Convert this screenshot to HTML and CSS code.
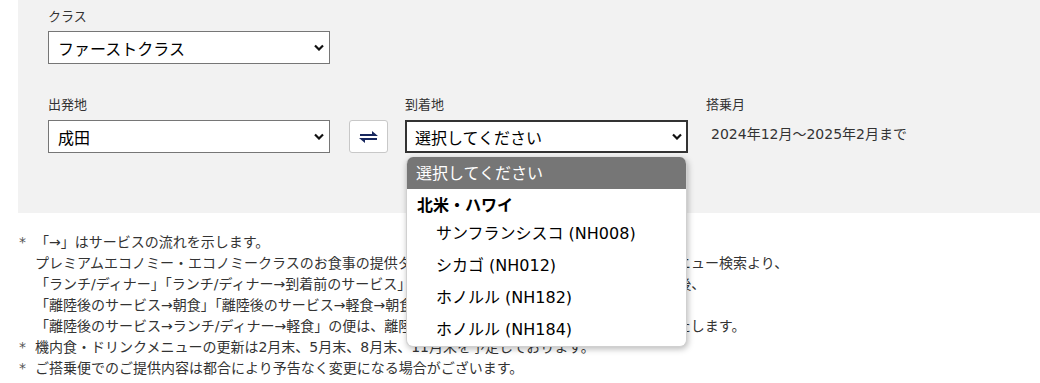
FILE: index.html
```html
<!DOCTYPE html>
<html lang="ja">
<head>
<meta charset="utf-8">
<title>機内食メニュー検索</title>
<link rel="stylesheet" href="styles.css">
</head>
<body>
<div class="panel">
  <div class="field">
    <div class="label">クラス</div>
    <div class="select">
      <span class="value">ファーストクラス</span>
      <svg class="chev" width="10" height="7" viewBox="0 0 10 7"><polyline points="1,1.5 5,5.5 9,1.5" fill="none" stroke="#111" stroke-width="2.2"/></svg>
    </div>
  </div>
  <div class="row">
    <div class="field">
      <div class="label">出発地</div>
      <div class="select">
        <span class="value">成田</span>
        <svg class="chev" width="10" height="7" viewBox="0 0 10 7"><polyline points="1,1.5 5,5.5 9,1.5" fill="none" stroke="#111" stroke-width="2.2"/></svg>
      </div>
    </div>
    <button class="swap" type="button" aria-label="入れ替え">
      <svg width="19" height="14" viewBox="0 0 19 14"><polygon points="1,4 13,4 13,1 19,6 1,6" fill="#17275e"/><polygon points="0,8 18,8 18,10 6,10 6,13" fill="#17275e"/></svg>
    </button>
    <div class="field">
      <div class="label">到着地</div>
      <div class="select-wrap">
        <div class="select focused">
          <span class="value">選択してください</span>
          <svg class="chev" width="10" height="7" viewBox="0 0 10 7"><polyline points="1,1.5 5,5.5 9,1.5" fill="none" stroke="#111" stroke-width="2.2"/></svg>
        </div>
        <div class="popup">
          <div class="opt selected">選択してください</div>
          <div class="group">北米・ハワイ</div>
          <div class="opt sub">サンフランシスコ (NH008)</div>
          <div class="opt sub">シカゴ (NH012)</div>
          <div class="opt sub">ホノルル (NH182)</div>
          <div class="opt sub">ホノルル (NH184)</div>
        </div>
      </div>
    </div>
    <div class="field month">
      <div class="label">搭乗月</div>
      <div class="period">2024年12月～2025年2月まで</div>
    </div>
  </div>
</div>
<div class="notes">
  <div class="note">
    <span class="mark">*</span>
    <div class="body">
      <p>「→」はサービスの流れを示します。</p>
      <p>プレミアムエコノミー・エコノミークラスのお食事の提供タイミングについては、ご搭乗便の機内食メニュー検索より、</p>
      <p>「ランチ/ディナー」「ランチ/ディナー→到着前のサービス」の便は、離陸後すぐのお食事を終えられた後、</p>
      <p>「離陸後のサービス→朝食」「離陸後のサービス→軽食→朝食」の便は、到着前にご用意いたします。</p>
      <p>「離陸後のサービス→ランチ/ディナー→軽食」の便は、離陸後の食事を「ランチ / ディナー」と表示いたします。</p>
    </div>
  </div>
  <div class="note">
    <span class="mark">*</span>
    <div class="body"><p>機内食・ドリンクメニューの更新は2月末、5月末、8月末、11月末を予定しております。</p></div>
  </div>
  <div class="note">
    <span class="mark">*</span>
    <div class="body"><p>ご搭乗便でのご提供内容は都合により予告なく変更になる場合がございます。</p></div>
  </div>
</div>
</body>
</html>
```
FILE: styles.css
```css
* { box-sizing: border-box; }
body {
  margin: 0;
  font-family: "DejaVu Sans", "Noto Sans CJK JP", sans-serif;
  color: #333;
  background: #fff;
}
.panel {
  margin-left: 18px;
  height: 213px;
  background: #f2f2f2;
  padding: 8px 0 0 30px;
}
.label {
  font-size: 13px;
  line-height: 18px;
  color: #333;
}
.select {
  width: 282px;
  height: 33px;
  margin-top: 5px;
  background: #fff;
  border: 1px solid #767676;
  display: flex;
  align-items: center;
  justify-content: space-between;
  padding: 0 5px 0 9px;
  font-size: 16px;
  color: #000;
}
.select.focused {
  width: 283px;
  border: 2px solid #333;
  padding: 0 4px 0 8px;
  margin-top: 0;
}
.select-wrap {
  position: relative;
  margin-top: 6px;
}
.row {
  display: flex;
  align-items: flex-end;
  margin-top: 32px;
}
.row .select { margin-top: 6px; }
.row .select.focused { margin-top: 0; }
.swap {
  width: 39px;
  height: 33px;
  margin: 0 17px 0 19px;
  background: #fff;
  border: 1px solid #c8c8c8;
  border-radius: 3px;
  display: flex;
  align-items: center;
  justify-content: center;
  padding: 0;
}
.swap svg { display: block; }
.month {
  margin-left: 18px;
  align-self: flex-start;
}
.period {
  margin-top: 10px;
  padding-left: 5px;
  font-size: 14px;
  line-height: 20px;
  color: #333;
}
.popup {
  position: absolute;
  z-index: 10;
  top: 37px;
  left: 1px;
  width: 281px;
  background: #fff;
  border: 1px solid #d0d0d0;
  border-top: none;
  border-radius: 7px;
  overflow: hidden;
  box-shadow: 1px 2px 6px rgba(0, 0, 0, 0.28);
  padding-bottom: 1px;
  font-size: 16px;
  color: #000;
}
.opt {
  height: 32px;
  line-height: 32px;
  padding-left: 29px;
}
.opt.sub {
  padding-top: 2px;
  line-height: 30px;
}
.opt.selected {
  background: #767676;
  color: #fff;
  padding: 1px 0 0 9px;
  line-height: 31px;
}
.group {
  height: 28px;
  padding: 5px 0 0 10px;
  line-height: 23px;
  font-weight: bold;
}
.notes {
  margin-top: 19px;
  font-size: 14px;
  line-height: 21px;
  color: #333;
}
.note {
  display: flex;
  padding-left: 19px;
}
.mark {
  width: 16px;
  flex: none;
  color: #555;
}
.body p {
  margin: 0;
  white-space: nowrap;
}
```
